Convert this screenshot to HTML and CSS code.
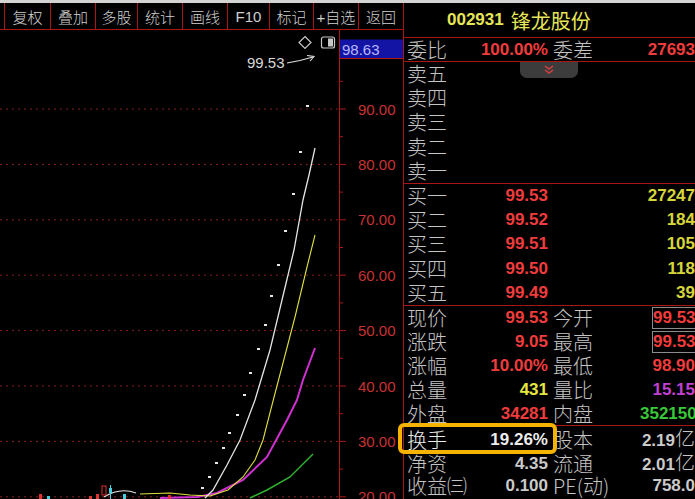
FILE: index.html
```html
<!DOCTYPE html>
<html lang="zh-CN">
<head>
<meta charset="utf-8">
<title>002931 锋龙股份</title>
<link rel="stylesheet" href="styles.css">
</head>
<body>
<div class="screen">
  <div class="topstrip"></div>
  <div class="main">
    <div class="left">
      <div class="toolbar">
        <span class="lead"></span>
        <span class="tb">复权</span>
        <span class="tb">叠加</span>
        <span class="tb">多股</span>
        <span class="tb">统计</span>
        <span class="tb">画线</span>
        <span class="tb">F10</span>
        <span class="tb">标记</span>
        <span class="tb">+自选</span>
        <span class="tb">返回</span>
      </div>
      <svg class="chart" width="403" height="469" viewBox="0 30 403 469" xmlns="http://www.w3.org/2000/svg">
        <g class="grid" stroke="#8c1c1c" stroke-width="1" stroke-dasharray="2 4">
          <line x1="0" y1="109" x2="339" y2="109"/>
          <line x1="0" y1="164.4" x2="339" y2="164.4"/>
          <line x1="0" y1="219.8" x2="339" y2="219.8"/>
          <line x1="0" y1="275.2" x2="339" y2="275.2"/>
          <line x1="0" y1="330.6" x2="339" y2="330.6"/>
          <line x1="0" y1="386" x2="339" y2="386"/>
          <line x1="0" y1="441.4" x2="339" y2="441.4"/>
          <line x1="0" y1="496.8" x2="339" y2="496.8"/>
        </g>
        <line x1="339.5" y1="30" x2="339.5" y2="499" stroke="#b01818" stroke-width="1"/>
        <g stroke="#b01818" stroke-width="1">
          <line x1="339" y1="81.3" x2="343" y2="81.3"/>
          <line x1="339" y1="109" x2="346" y2="109"/>
          <line x1="339" y1="136.7" x2="343" y2="136.7"/>
          <line x1="339" y1="164.4" x2="346" y2="164.4"/>
          <line x1="339" y1="192.1" x2="343" y2="192.1"/>
          <line x1="339" y1="219.8" x2="346" y2="219.8"/>
          <line x1="339" y1="247.5" x2="343" y2="247.5"/>
          <line x1="339" y1="275.2" x2="346" y2="275.2"/>
          <line x1="339" y1="302.9" x2="343" y2="302.9"/>
          <line x1="339" y1="330.6" x2="346" y2="330.6"/>
          <line x1="339" y1="358.3" x2="343" y2="358.3"/>
          <line x1="339" y1="386" x2="346" y2="386"/>
          <line x1="339" y1="413.7" x2="343" y2="413.7"/>
          <line x1="339" y1="441.4" x2="346" y2="441.4"/>
          <line x1="339" y1="469.1" x2="343" y2="469.1"/>
          <line x1="339" y1="496.8" x2="346" y2="496.8"/>
        </g>
        <g class="axis-label" fill="#c83232" font-size="15">
          <text x="358" y="114.5">90.00</text>
          <text x="358" y="169.9">80.00</text>
          <text x="358" y="225.3">70.00</text>
          <text x="358" y="280.7">60.00</text>
          <text x="358" y="336.1">50.00</text>
          <text x="358" y="391.5">40.00</text>
          <text x="358" y="446.9">30.00</text>
          <text x="358" y="502.3">20.00</text>
        </g>
        <rect x="340" y="39.5" width="63" height="19" fill="#1414a4"/>
        <line x1="340" y1="58.5" x2="403" y2="58.5" stroke="#b01818"/>
        <text x="342" y="54.5" fill="#b8b8ff" font-size="15" class="axis-label">98.63</text>

        <path d="M305 36.5 L311 42.5 L305 48.5 L299 42.5 Z" fill="none" stroke="#c8c8c8" stroke-width="1.2"/>
        <rect x="321.5" y="37" width="13" height="11" rx="2" fill="none" stroke="#c8c8c8" stroke-width="1.2"/>
        <rect x="328" y="38.5" width="5" height="8" fill="#c8c8c8"/>

        <text x="247" y="67.5" fill="#d8d8d8" font-size="15" class="axis-label">99.53</text>
        <path d="M287 63 L300 60.5 L313 57" fill="none" stroke="#e0e0e0" stroke-width="1.1"/>
        <path d="M307 55.5 L314 56.5 L310 61" fill="none" stroke="#e0e0e0" stroke-width="1.1"/>

        <g fill="#e8e8e8">
          <rect x="306" y="105" width="3" height="2"/>
          <rect x="299" y="151" width="3" height="2"/>
          <rect x="292" y="193" width="3" height="2"/>
          <rect x="284" y="230" width="3" height="2"/>
          <rect x="277" y="264" width="3" height="2"/>
          <rect x="270" y="295" width="3" height="2"/>
          <rect x="264" y="324" width="3" height="2"/>
          <rect x="257" y="348" width="3" height="2"/>
          <rect x="249" y="372" width="3" height="2"/>
          <rect x="243" y="394" width="3" height="2"/>
          <rect x="236" y="414" width="3" height="2"/>
          <rect x="228" y="432" width="3" height="2"/>
          <rect x="222" y="447" width="3" height="2"/>
          <rect x="215" y="462" width="3" height="2"/>
          <rect x="208" y="476" width="3" height="2"/>
          <rect x="201" y="487" width="3" height="2"/>
        </g>

        <path d="M160 498 L197 497 L217 493 L243 480 L267 457 L287 420 L297 400 L303 380 L315 348" fill="none" stroke="#d030d0" stroke-width="2"/>
        <path d="M250 498 L267 490 L290 477 L313 454" fill="none" stroke="#30b030" stroke-width="1.5"/>
        <path d="M140 494 L170 493 L190 495 L210 496 L228 490 L243 477 L255 460 L263 440 L272 405 L278 382 L283 363 L295 317 L307 267 L315 235" fill="none" stroke="#e0e040" stroke-width="1.1"/>
        <path d="M205 498 L213 490 L227 465 L240 440 L255 400 L270 350 L282 300 L294 250 L303 200 L309 175 L315 148" fill="none" stroke="#e4e4e4" stroke-width="1.3"/>
        <path d="M104 497 Q120 487 136 493" fill="none" stroke="#e4e4e4" stroke-width="1.2"/>

        <g>
          <rect x="39" y="494" width="3" height="5" fill="#e03030"/>
          <rect x="47" y="496" width="3" height="3" fill="#40d0e0"/>
          <rect x="89" y="496" width="3" height="3" fill="#e03030"/>
          <rect x="96" y="494" width="3" height="5" fill="#e03030"/>
          <rect x="102" y="486" width="4" height="9" fill="none" stroke="#e03030" stroke-width="1"/>
          <rect x="109" y="488" width="3" height="5" fill="#40d0e0"/>
          <line x1="110.5" y1="485" x2="110.5" y2="499" stroke="#40d0e0"/>
          <rect x="123" y="494" width="3" height="5" fill="#40d0e0"/>
          <rect x="168" y="495" width="3" height="4" fill="#e03030"/>
        </g>
      </svg>
    </div>

    <div class="panel">
      <div class="hdr"><b class="code">002931</b><span class="name">锋龙股份</span></div>

      <div class="row wb">
        <span class="lbl">委比</span><span class="val red">100.00%</span>
        <span class="lbl2">委差</span><span class="val red">27693</span>
      </div>

      <div class="sec sells">
        <div class="row"><span class="lbl">卖五</span></div>
        <div class="row"><span class="lbl">卖四</span></div>
        <div class="row"><span class="lbl">卖三</span></div>
        <div class="row"><span class="lbl">卖二</span></div>
        <div class="row"><span class="lbl">卖一</span></div>
      </div>

      <div class="sec buys">
        <div class="row"><span class="lbl">买一</span><span class="val red">99.53</span><span class="lbl2"></span><span class="val yel">27247</span></div>
        <div class="row"><span class="lbl">买二</span><span class="val red">99.52</span><span class="lbl2"></span><span class="val yel">184</span></div>
        <div class="row"><span class="lbl">买三</span><span class="val red">99.51</span><span class="lbl2"></span><span class="val yel">105</span></div>
        <div class="row"><span class="lbl">买四</span><span class="val red">99.50</span><span class="lbl2"></span><span class="val yel">118</span></div>
        <div class="row"><span class="lbl">买五</span><span class="val red">99.49</span><span class="lbl2"></span><span class="val yel">39</span></div>
      </div>

      <div class="sec quote">
        <div class="row"><span class="lbl">现价</span><span class="val red">99.53</span><span class="lbl2">今开</span><span class="val red boxed">99.53</span></div>
        <div class="row"><span class="lbl">涨跌</span><span class="val red">9.05</span><span class="lbl2">最高</span><span class="val red boxed">99.53</span></div>
        <div class="row"><span class="lbl">涨幅</span><span class="val red">10.00%</span><span class="lbl2">最低</span><span class="val red">98.90</span></div>
        <div class="row"><span class="lbl">总量</span><span class="val yel2">431</span><span class="lbl2">量比</span><span class="val pur">15.15</span></div>
        <div class="row"><span class="lbl">外盘</span><span class="val red">34281</span><span class="lbl2">内盘</span><span class="val grn">352150</span></div>
      </div>

      <div class="sec fin">
        <div class="row"><span class="lbl wht">换手</span><span class="val wht">19.26%</span><span class="lbl2">股本</span><span class="val gry">2.19<span class="cn">亿</span></span></div>
        <div class="row"><span class="lbl">净资</span><span class="val gry">4.35</span><span class="lbl2">流通</span><span class="val gry">2.01<span class="cn">亿</span></span></div>
        <div class="row"><span class="lbl">收益㈢</span><span class="val gry">0.100</span><span class="lbl2">PE(动)</span><span class="val gry">758.0</span></div>
      </div>
    </div>
  </div>

  <div class="tab">
    <svg width="10" height="10" viewBox="0 0 10 10" xmlns="http://www.w3.org/2000/svg">
      <path d="M1 1 L5 4 L9 1 M1 5 L5 8 L9 5" fill="none" stroke="#d84040" stroke-width="1.5"/>
    </svg>
  </div>
  <div class="hl"></div>
</div>
</body>
</html>
```

FILE: styles.css
```css
html, body {
  margin: 0;
  padding: 0;
  background: #000;
  overflow: hidden;
}

body {
  font-family: "Liberation Sans", "Noto Sans CJK SC", sans-serif;
  color: #c8c8c8;
}

.screen {
  position: relative;
  width: 695px;
  height: 499px;
  overflow: hidden;
  background: #000;
}

.topstrip {
  height: 3px;
  background: #d4d4d4;
}

.main {
  display: flex;
  height: 496px;
}

.left {
  width: 403px;
  flex: none;
  display: flex;
  flex-direction: column;
}

.toolbar {
  display: grid;
  grid-template-columns: 4px 46px 45px 42px 45px 45px 42px 44px 45px 45px;
  height: 26px;
  border-bottom: 1px solid #a81616;
}

.tb {
  border-left: 1px solid #a81616;
  color: #d0d0d0;
  font-size: 15px;
  font-weight: 300;
  display: flex;
  align-items: center;
  justify-content: center;
  white-space: nowrap;
  font-family: "Liberation Sans", "Noto Sans CJK SC", sans-serif;
}

.chart {
  display: block;
}

.axis-label {
  font-family: "Liberation Sans", sans-serif;
}

.panel {
  flex: 1;
  border-left: 1px solid #a81616;
  display: flex;
  flex-direction: column;
}

.hdr {
  height: 34px;
  border-bottom: 1px solid #a81616;
  display: flex;
  align-items: center;
  padding-left: 43px;
  color: #e6e658;
  gap: 7px;
}

.code {
  font-size: 17px;
  font-weight: bold;
}

.name {
  font-size: 20px;
  font-family: "Noto Sans CJK SC", sans-serif;
}

.row {
  display: grid;
  grid-template-columns: 64px 77px 92px 58px;
  padding-left: 3px;
  align-items: center;
  height: 24px;
  line-height: 24px;
  white-space: nowrap;
}

.wb {
  height: 23px;
  line-height: 23px;
  border-bottom: 1px solid #a81616;
}

.sec {
  display: grid;
  grid-template-rows: repeat(5, 1fr);
  border-bottom: 1px solid #a81616;
}

.sec .row {
  height: auto;
}

.sells, .buys {
  height: 121px;
}

.quote {
  height: 119px;
}

.fin {
  grid-template-rows: repeat(3, 24px);
  border-bottom: none;
}

.lbl, .lbl2, .cn {
  font-family: "Noto Sans CJK SC", sans-serif;
  font-size: 20px;
  font-weight: 300;
  color: #c4c4c4;
}

.lbl2 {
  padding-left: 5px;
}

.val {
  text-align: right;
  font-weight: bold;
  font-size: 17px;
}

.row > .val:last-child {
  padding-right: 3px;
}

.cn {
  color: #c8c8c8;
}

.red { color: #f03c3c; }
.yel { color: #d6d63a; }
.yel2 { color: #e6e640; }
.pur { color: #c040d0; }
.grn { color: #38c838; }
.wht { color: #ececec; }
.gry { color: #cacaca; }

.boxed {
  justify-self: end;
  width: 46px;
  height: 22px;
  line-height: 20px;
  box-sizing: border-box;
  border: 1px solid #8c8c8c;
  border-right: none;
}

.tab {
  position: absolute;
  left: 520px;
  top: 62px;
  width: 58px;
  height: 16px;
  background: #3c3c3c;
  border-radius: 0 0 7px 7px;
  display: flex;
  align-items: center;
  justify-content: center;
}

.hl {
  position: absolute;
  left: 398px;
  top: 423px;
  width: 159px;
  height: 31px;
  box-sizing: border-box;
  border: 4px solid #f6b400;
  border-radius: 6px;
}
```
